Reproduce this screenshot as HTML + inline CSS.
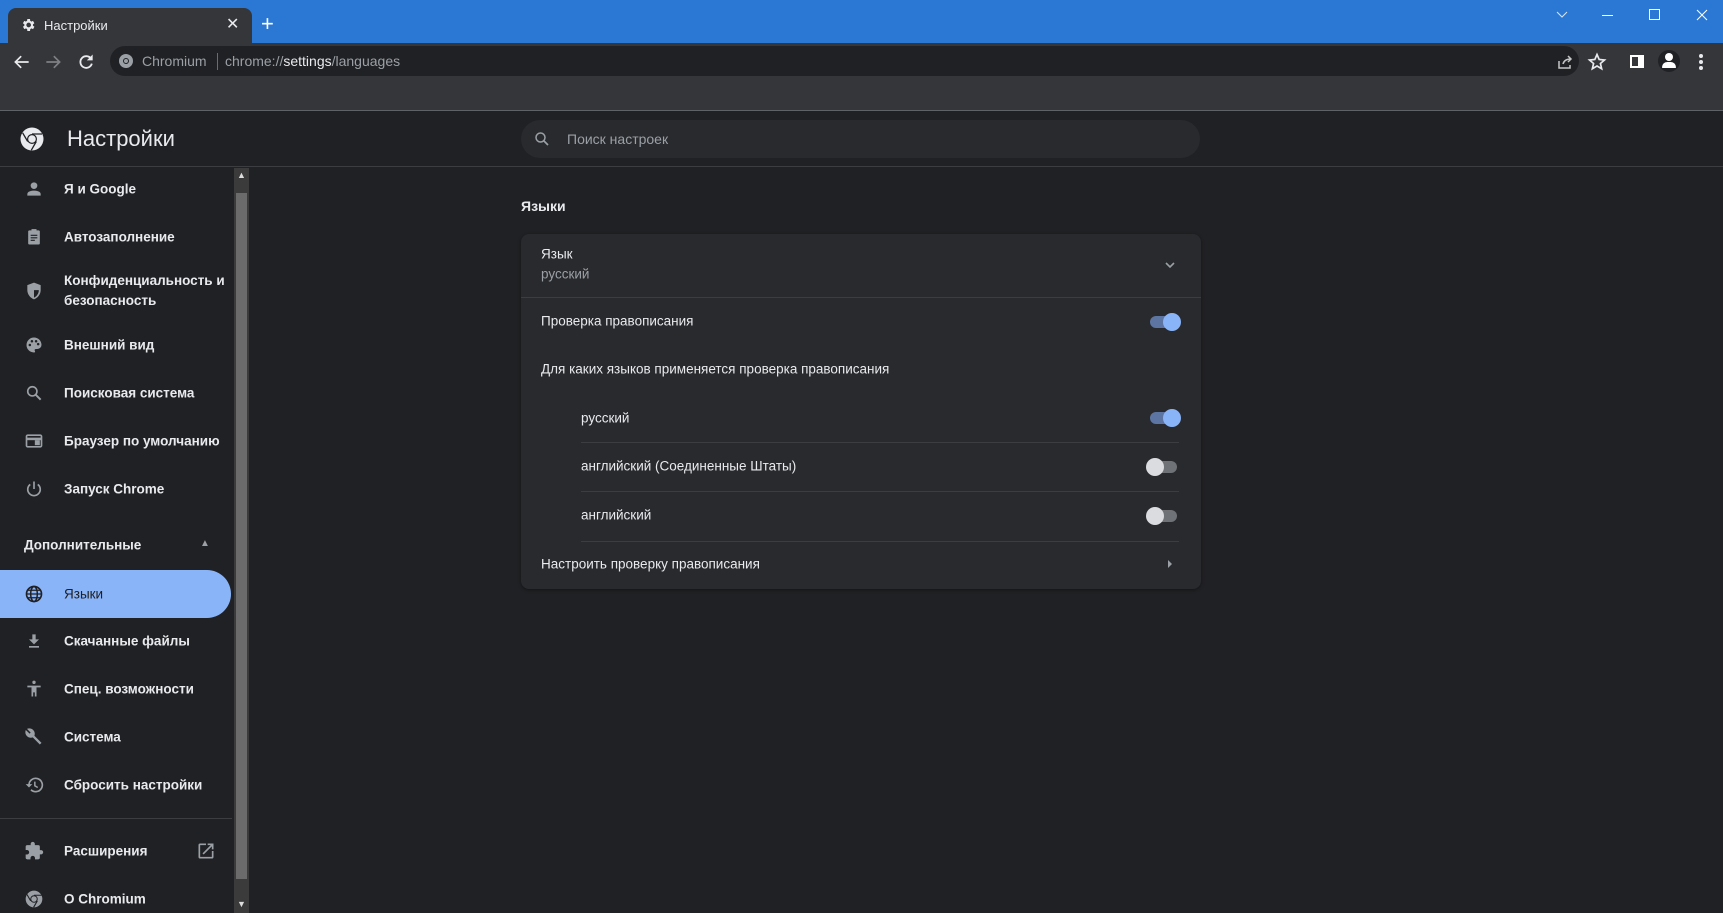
<!DOCTYPE html>
<html><head><meta charset="utf-8"><style>
*{margin:0;padding:0;box-sizing:border-box}
body{width:1723px;height:913px;overflow:hidden;background:#202124;font-family:"Liberation Sans","Noto Sans CJK SC",sans-serif;color:#e8eaed;position:relative}
.a{position:absolute}
.t{position:absolute;white-space:nowrap}
.mi{position:absolute;left:64px;font-size:13.5px;font-weight:bold;color:#e8eaed;transform:translateY(-50%)}
.ic{position:absolute;left:24px;width:20px;height:20px;transform:translateY(-50%)}
.row{position:absolute;font-size:13.5px;color:#e8eaed;transform:translateY(-50%)}
.dv{position:absolute;height:1px;background:#3c3d40}
.tg{position:absolute;width:30px;height:12px;border-radius:6px;transform:translateY(-50%)}
.tg i{position:absolute;top:-3px;width:18px;height:18px;border-radius:50%}
</style></head><body>
<div class="a" style="left:0;top:0;width:1723px;height:43px;background:#2a78d4"></div>
<div class="a" style="left:8px;top:8px;width:244px;height:35px;background:#35363a;border-radius:8px 8px 0 0"></div>
<svg class="a" style="left:20px;top:17px" width="16" height="16" viewBox="0 0 24 24"><path fill="#e8eaed" d="M19.4 13a7.8 7.8 0 0 0 0-2l2.1-1.6-2-3.5-2.5 1a7 7 0 0 0-1.7-1L15 3h-4l-.4 2.9a7 7 0 0 0-1.7 1l-2.5-1-2 3.5L6.6 11a7.8 7.8 0 0 0 0 2l-2.1 1.6 2 3.5 2.5-1a7 7 0 0 0 1.7 1L11 21h4l.4-2.9a7 7 0 0 0 1.7-1l2.5 1 2-3.5zM13 15.5a3.5 3.5 0 1 1 0-7 3.5 3.5 0 0 1 0 7z"/></svg>
<div class="t" style="left:44px;top:18px;font-size:13px;color:#e8eaed">Настройки</div>
<div class="t" style="left:226px;top:14px;font-size:16px;color:#e8eaed">✕</div>
<div class="t" style="left:261px;top:11px;font-size:22px;color:#fff">+</div>
<svg class="a" style="left:1555px;top:8px" width="14" height="14"><path d="M2 4l5 5 5-5" stroke="#dbe6f5" fill="none"/></svg>
<div class="a" style="left:1602px;top:15px;width:11px;height:1px;background:#fff"></div>
<div class="a" style="left:1649px;top:9px;width:11px;height:11px;border:1px solid #fff"></div>
<svg class="a" style="left:1695px;top:8px" width="14" height="14"><path d="M2 2l10 10M12 2L2 12" stroke="#fff"/></svg>
<div class="a" style="left:0;top:43px;width:1723px;height:68px;background:#35363a;border-bottom:1px solid #5f6368"></div>
<svg class="a" style="left:12px;top:52px" width="20" height="20" viewBox="0 0 24 24"><path d="M20 12H5M11 5l-7 7 7 7" stroke="#e8eaed" stroke-width="2" fill="none"/></svg>
<svg class="a" style="left:43px;top:52px" width="20" height="20" viewBox="0 0 24 24"><path d="M4 12h15M13 5l7 7-7 7" stroke="#7d8084" stroke-width="2" fill="none"/></svg>
<svg class="a" style="left:76px;top:52px" width="20" height="20" viewBox="0 0 24 24"><path d="M18 8a7 7 0 1 0 1 6" stroke="#e8eaed" stroke-width="2.2" fill="none"/><path d="M20 3v7h-7z" fill="#e8eaed"/></svg>
<div class="a" style="left:110px;top:46px;width:1469px;height:30px;border-radius:15px;background:#202124"></div>
<svg class="a" style="left:118px;top:53px" width="16" height="16" viewBox="0 0 16 16"><circle cx="8" cy="8" r="7" fill="#9aa0a6"/><circle cx="8" cy="8" r="3" fill="#202124"/><circle cx="8" cy="8" r="2" fill="#9aa0a6"/></svg>
<div class="t" style="left:142px;top:53px;font-size:14px;color:#9aa0a6">Chromium</div>
<div class="a" style="left:217px;top:53px;width:1px;height:17px;background:#6a6c70"></div>
<div class="t" style="left:225px;top:53px;font-size:14px;color:#9aa0a6">chrome://<span style="color:#e8eaed">settings</span>/languages</div>
<svg class="a" style="left:1555px;top:52px" width="20" height="20" viewBox="0 0 20 20"><path d="M4 9v7h11v-3M8 12c1-4 4-5 8-5M13 4l3 3-3 3" stroke="#c4c7c5" stroke-width="1.5" fill="none"/></svg>
<svg class="a" style="left:1587px;top:52px" width="20" height="20" viewBox="0 0 24 24"><path d="M12 3l2.6 6 6.4.6-4.9 4.2 1.5 6.3L12 16.8 6.4 20.1l1.5-6.3L3 9.6 9.4 9z" stroke="#e8eaed" stroke-width="2" fill="none"/></svg>
<div class="a" style="left:1630px;top:55px;width:14px;height:13px;border:2px solid #fff;background:linear-gradient(90deg,#35363a 0 6px,#fff 6px)"></div>
<div class="a" style="left:1658px;top:50px;width:22px;height:22px;border-radius:50%;background:#202124"></div>
<div class="a" style="left:1665px;top:53px;width:8px;height:8px;border-radius:50%;background:#fff"></div>
<div class="a" style="left:1662px;top:62px;width:14px;height:6px;border-radius:7px 7px 1px 1px;background:#fff"></div>
<div class="a" style="left:1699px;top:54px;width:4px;height:4px;border-radius:50%;background:#e8eaed;box-shadow:0 6px #e8eaed,0 12px #e8eaed"></div>
<div class="a" style="left:0;top:112px;width:1723px;height:55px;background:#202124;border-bottom:1px solid #3c3d40"></div>
<svg class="a" style="left:20px;top:127px" width="24" height="24" viewBox="0 0 24 24"><circle cx="12" cy="12" r="11.5" fill="#e8eaed"/><circle cx="12" cy="12" r="5" fill="#202124"/><circle cx="12" cy="12" r="3.8" fill="#e8eaed"/><path d="M12 7h10M7.7 14.5L2.6 5.8M16.3 14.5l-5 8.7" stroke="#202124" stroke-width="1.3"/></svg>
<div class="t" style="left:67px;top:126px;font-size:22px;color:#e8eaed">Настройки</div>
<div class="a" style="left:521px;top:120px;width:679px;height:38px;border-radius:19px;background:#292a2d"></div>
<svg class="a" style="left:533px;top:130px" width="18" height="18" viewBox="0 0 24 24"><circle cx="10" cy="10" r="6" stroke="#9aa0a6" stroke-width="2" fill="none"/><path d="M14.5 14.5L20 20" stroke="#9aa0a6" stroke-width="2.2"/></svg>
<div class="t" style="left:567px;top:131px;font-size:14px;color:#9aa0a6">Поиск настроек</div>
<div class="a" style="left:234px;top:168px;width:15px;height:745px;background:#3b3b3b"></div>
<div class="a" style="left:236px;top:193px;width:11px;height:686px;background:#6b6b6b"></div>
<div class="t" style="left:237px;top:170px;font-size:9px;color:#ddd">▲</div>
<div class="t" style="left:237px;top:899px;font-size:9px;color:#ddd">▼</div>
<div class="a" style="left:0;top:570px;width:231px;height:48px;background:#8ab4f8;border-radius:0 24px 24px 0"></div>
<div class="a" style="left:0;top:818px;width:232px;height:1px;background:#3c3d40"></div>

<svg class="ic" style="top:189px" viewBox="0 0 24 24"><circle cx="12" cy="8" r="4" fill="#9aa0a6"/><path d="M4 20v-2c0-3 5-4 8-4s8 1 8 4v2z" fill="#9aa0a6"/></svg>
<div class="mi" style="top:189px">Я и Google</div>
<svg class="ic" style="top:237px" viewBox="0 0 24 24"><rect x="5" y="4" width="14" height="17" rx="1.5" fill="#9aa0a6"/><rect x="9" y="2.5" width="6" height="3" fill="#9aa0a6"/><path d="M8 10h8M8 13h8M8 16h5" stroke="#202124" stroke-width="1.3"/></svg>
<div class="mi" style="top:237px">Автозаполнение</div>
<svg class="ic" style="top:291px" viewBox="0 0 24 24"><path d="M12 2l8 3v6c0 5-3.5 9.5-8 11-4.5-1.5-8-6-8-11V5z" fill="#9aa0a6"/><path d="M12 4.5v15.5c3-1.3 5.8-4.8 5.8-9V11H12z" fill="#202124"/></svg>
<div class="mi" style="top:291px;line-height:20px">Конфиденциальность и<br>безопасность</div>
<svg class="ic" style="top:345px" viewBox="0 0 24 24"><path d="M12 3a9 9 0 0 0 0 18c1.4 0 1.6-1.2 1-2s-.2-2.2 1.2-2.2H16a5 5 0 0 0 5-5c0-4.9-4-8.8-9-8.8z" fill="#9aa0a6"/><circle cx="7" cy="12" r="1.5" fill="#202124"/><circle cx="9.5" cy="7.5" r="1.5" fill="#202124"/><circle cx="14.5" cy="7.5" r="1.5" fill="#202124"/><circle cx="17" cy="11" r="1.5" fill="#202124"/></svg>
<div class="mi" style="top:345px">Внешний вид</div>
<svg class="ic" style="top:393px" viewBox="0 0 24 24"><circle cx="10" cy="10" r="5.5" stroke="#9aa0a6" stroke-width="2" fill="none"/><path d="M14 14l6 6" stroke="#9aa0a6" stroke-width="2.4"/></svg>
<div class="mi" style="top:393px">Поисковая система</div>
<svg class="ic" style="top:441px" viewBox="0 0 24 24"><rect x="3" y="5" width="18" height="14" rx="1.5" stroke="#9aa0a6" stroke-width="2" fill="none"/><rect x="3" y="8" width="18" height="3" fill="#9aa0a6"/><rect x="13" y="11" width="6" height="6" fill="#9aa0a6"/></svg>
<div class="mi" style="top:441px">Браузер по умолчанию</div>
<svg class="ic" style="top:489px" viewBox="0 0 24 24"><path d="M12 3v9" stroke="#9aa0a6" stroke-width="2"/><path d="M7.5 6.5a7.5 7.5 0 1 0 9 0" stroke="#9aa0a6" stroke-width="2" fill="none"/></svg>
<div class="mi" style="top:489px">Запуск Chrome</div>
<div class="mi" style="top:545px;left:24px">Дополнительные</div>
<div class="t" style="left:200px;top:538px;font-size:10px;color:#9aa0a6">▲</div>
<svg class="ic" style="top:594px" viewBox="0 0 24 24"><circle cx="12" cy="12" r="9" stroke="#202124" stroke-width="2" fill="none"/><ellipse cx="12" cy="12" rx="4" ry="9" stroke="#202124" stroke-width="1.8" fill="none"/><path d="M3 12h18M4.5 7.5h15M4.5 16.5h15" stroke="#202124" stroke-width="1.6"/></svg>
<div class="mi" style="top:594px;color:#202124;font-weight:normal">Языки</div>
<svg class="ic" style="top:641px" viewBox="0 0 24 24"><path d="M10 4h4v6h4l-6 6-6-6h4z" fill="#9aa0a6"/><rect x="6" y="18" width="12" height="2" fill="#9aa0a6"/></svg>
<div class="mi" style="top:641px">Скачанные файлы</div>
<svg class="ic" style="top:689px" viewBox="0 0 24 24"><circle cx="12" cy="4" r="2" fill="#9aa0a6"/><path d="M4 8h16v2h-5v11h-2v-5h-2v5H9V10H4z" fill="#9aa0a6"/></svg>
<div class="mi" style="top:689px">Спец. возможности</div>
<svg class="ic" style="top:737px" viewBox="0 0 24 24"><path d="M21 19l-8.5-8.5c.9-2.3.4-5-1.5-6.9-2-2-5-2.4-7.4-1.3L8 6.7 6.7 8 2.2 3.6C1.1 6 1.6 9 3.6 11c1.9 1.9 4.6 2.4 6.9 1.5L19 21z" fill="#9aa0a6"/></svg>
<div class="mi" style="top:737px">Система</div>
<svg class="ic" style="top:785px" viewBox="0 0 24 24"><path d="M6 12a8 8 0 1 1 2.4 5.7" stroke="#9aa0a6" stroke-width="2" fill="none"/><path d="M2 11h8l-4 4z" fill="#9aa0a6"/><path d="M13 8v5l3.5 2" stroke="#9aa0a6" stroke-width="1.8" fill="none"/></svg>
<div class="mi" style="top:785px">Сбросить настройки</div>
<svg class="ic" style="top:851px" viewBox="0 0 24 24"><path d="M20.5 11H19V7a2 2 0 0 0-2-2h-4V3.5a2.5 2.5 0 0 0-5 0V5H4a2 2 0 0 0-2 2v3.8h1.5a2.7 2.7 0 0 1 0 5.4H2V20a2 2 0 0 0 2 2h3.8v-1.5a2.7 2.7 0 0 1 5.4 0V22H17a2 2 0 0 0 2-2v-4h1.5a2.5 2.5 0 0 0 0-5z" fill="#9aa0a6"/></svg>
<div class="mi" style="top:851px">Расширения</div>
<svg class="a" style="left:196px;top:841px" width="20" height="20" viewBox="0 0 24 24"><path d="M19 19H5V5h7V3H5a2 2 0 0 0-2 2v14a2 2 0 0 0 2 2h14a2 2 0 0 0 2-2v-7h-2zM14 3v2h3.6l-9.8 9.8 1.4 1.4L19 6.4V10h2V3z" fill="#9aa0a6"/></svg>
<svg class="ic" style="top:899px" viewBox="0 0 24 24"><circle cx="12" cy="12" r="10" fill="#9aa0a6"/><circle cx="12" cy="12" r="4.5" fill="#202124"/><circle cx="12" cy="12" r="3.3" fill="#9aa0a6"/><path d="M12 7.5h9M8 14.3L3.5 6.5M16 14.3l-4.5 7.7" stroke="#202124" stroke-width="1.3"/></svg>
<div class="mi" style="top:899px">О Chromium</div>
<div class="t" style="left:521px;top:198px;font-size:14px;font-weight:bold;color:#e8eaed">Языки</div>
<div class="a" style="left:521px;top:234px;width:680px;height:355px;background:#292a2d;border-radius:8px;box-shadow:0 1px 3px rgba(0,0,0,.4)"></div>
<div class="row" style="left:541px;top:254px">Язык</div>
<div class="row" style="left:541px;top:274px;color:#9aa0a6">русский</div>
<svg class="a" style="left:1164px;top:259px" width="12" height="12"><path d="M2 4l4 4 4-4" stroke="#9aa0a6" stroke-width="1.6" fill="none"/></svg>
<div class="dv" style="left:521px;top:297px;width:680px"></div>
<div class="row" style="left:541px;top:321px">Проверка правописания</div>
<div class="tg" style="left:1150px;top:322px;background:#5d75a3"><i style="left:13px;background:#8ab4f8"></i></div>
<div class="row" style="left:541px;top:369px">Для каких языков применяется проверка правописания</div>
<div class="row" style="left:581px;top:418px">русский</div>
<div class="tg" style="left:1150px;top:418px;background:#5d75a3"><i style="left:13px;background:#8ab4f8"></i></div>
<div class="dv" style="left:581px;top:442px;width:598px"></div>
<div class="row" style="left:581px;top:466px">английский (Соединенные Штаты)</div>
<div class="tg" style="left:1147px;top:467px;background:#6f7276"><i style="left:-1px;background:#dadce0"></i></div>
<div class="dv" style="left:581px;top:491px;width:598px"></div>
<div class="row" style="left:581px;top:515px">английский</div>
<div class="tg" style="left:1147px;top:516px;background:#6f7276"><i style="left:-1px;background:#dadce0"></i></div>
<div class="dv" style="left:581px;top:541px;width:598px"></div>
<div class="row" style="left:541px;top:564px">Настроить проверку правописания</div>
<svg class="a" style="left:1166px;top:558px" width="8" height="12"><path d="M2 2l4 4-4 4z" fill="#9aa0a6"/></svg>
</body></html>
